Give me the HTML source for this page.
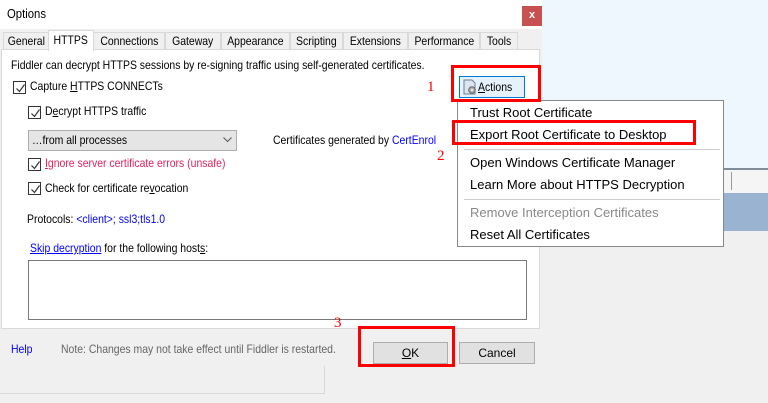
<!DOCTYPE html>
<html><head><meta charset="utf-8"><style>
*{margin:0;padding:0;box-sizing:border-box}
body{width:768px;height:403px;overflow:hidden;background:#f0f0f0;position:relative;font-family:"Liberation Sans","Noto Sans CJK SC",sans-serif;font-size:12px;color:#000}
.a{position:absolute;white-space:nowrap}
.n{transform-origin:0 0;transform:scaleX(.87)}
.cb{position:absolute;width:13px;height:13px;border:1px solid #333;background:#fff}
.cb svg{position:absolute;left:1px;top:1px}
.tab{position:absolute;top:32px;height:17px;border:1px solid #d9d9d9;border-bottom:none;background:#f0f0f0;font-size:12px;line-height:16px;text-align:center}
.tab span{display:inline-block;transform:scaleX(.87)}
.mi{position:absolute;left:12px;font-size:13px}
.red{position:absolute;border:3px solid #f00}
u{text-decoration:underline}
</style></head><body>
<div class="a" style="left:542px;top:0;width:226px;height:168px;background:#eef6fe"></div>
<div class="a" style="left:542px;top:168px;width:226px;height:2px;background:#7f8c99"></div>
<div class="a" style="left:542px;top:170px;width:226px;height:23px;background:#f5f5f5"></div>
<div class="a" style="left:731px;top:172px;width:1px;height:18px;background:#999"></div>
<div class="a" style="left:542px;top:193px;width:226px;height:38px;background:#9ab3d0"></div>
<div class="a" style="left:0;top:0;width:542px;height:29px;background:#fff"></div>
<div class="a n" style="left:7px;top:6px;font-size:13px">Options</div>
<div class="a" style="left:522px;top:6px;width:20px;height:20px;background:#c75050;color:#fff;font-size:11px;font-weight:bold;text-align:center;line-height:19px">x</div>
<div class="tab" style="left:3px;width:46px"><span>General</span></div>
<div class="tab" style="left:93px;width:72px"><span>Connections</span></div>
<div class="tab" style="left:165px;width:56px"><span>Gateway</span></div>
<div class="tab" style="left:221px;width:69px"><span>Appearance</span></div>
<div class="tab" style="left:290px;width:53px"><span>Scripting</span></div>
<div class="tab" style="left:343px;width:65px"><span>Extensions</span></div>
<div class="tab" style="left:408px;width:72px"><span>Performance</span></div>
<div class="tab" style="left:480px;width:38px"><span>Tools</span></div>
<div class="a" style="left:1px;top:49px;width:539px;height:280px;background:#fff;border:1px solid #d9d9d9"></div>
<div class="tab" style="left:48px;top:30px;width:46px;height:21px;background:#fff;border-color:#d9d9d9;line-height:18px;z-index:2"><span>HTTPS</span></div>
<div class="a n" style="left:11px;top:58px">Fiddler can decrypt HTTPS sessions by re-signing traffic using self-generated certificates.</div>
<div class="cb" style="left:13px;top:81px"><svg width="11" height="11"><path d="M1.5 5.5l3 3 5-7" stroke="#333" stroke-width="1.2" fill="none"/></svg></div>
<div class="a n" style="left:30px;top:79px">Capture <u>H</u>TTPS CONNECTs</div>
<div class="cb" style="left:28px;top:106px"><svg width="11" height="11"><path d="M1.5 5.5l3 3 5-7" stroke="#333" stroke-width="1.2" fill="none"/></svg></div>
<div class="a n" style="left:45px;top:104px">D<u>e</u>crypt HTTPS traffic</div>
<div class="a" style="left:28px;top:130px;width:209px;height:21px;background:#e5e5e5;border:1px solid #adadad"></div>
<div class="a n" style="left:32px;top:133px">…from all processes</div>
<svg class="a" style="left:223px;top:137px" width="9" height="6"><path d="M0.5 0.5l4 4 4-4" stroke="#555" fill="none"/></svg>
<div class="a n" style="left:273px;top:133px">Certificates generated by <span style="color:#00f">CertEnrol</span></div>
<div class="cb" style="left:28px;top:158px"><svg width="11" height="11"><path d="M1.5 5.5l3 3 5-7" stroke="#333" stroke-width="1.2" fill="none"/></svg></div>
<div class="a n" style="left:45px;top:156px;color:#e0245e"><u>I</u>gnore server certificate errors (unsafe)</div>
<div class="cb" style="left:28px;top:182px"><svg width="11" height="11"><path d="M1.5 5.5l3 3 5-7" stroke="#333" stroke-width="1.2" fill="none"/></svg></div>
<div class="a n" style="left:45px;top:181px">Check for certificate re<u>v</u>ocation</div>
<div class="a n" style="left:27px;top:212px">Protocols: <span style="color:#00f">&lt;client&gt;; ssl3;tls1.0</span></div>
<div class="a n" style="left:30px;top:241px"><u style="color:#00f">Skip decryption</u> for the following host<u>s</u>:</div>
<div class="a" style="left:28px;top:260px;width:499px;height:60px;border:1px solid #7a7a7a;background:#fff"></div>
<div class="a" style="left:0;top:366px;width:325px;height:28px;border-right:1px solid #d9d9d9;border-bottom:1px solid #d9d9d9"></div>
<div class="a n" style="left:11px;top:342px;color:#00f">Help</div>
<div class="a n" style="left:61px;top:342px;color:#666">Note: Changes may not take effect until Fiddler is restarted.</div>
<div class="a" style="left:373px;top:342px;width:75px;height:22px;background:#e1e1e1;border:1px solid #adadad;text-align:center;line-height:20px"><u>O</u>K</div>
<div class="a" style="left:459px;top:342px;width:76px;height:22px;background:#e1e1e1;border:1px solid #adadad;text-align:center;line-height:20px">Cancel</div>
<div class="a" style="left:459px;top:76px;width:66px;height:22px;background:#e5f1fb;border:1px solid #0078d7"></div>
<svg class="a" style="left:462px;top:79px" width="16" height="16"><path d="M2 1h8l3 3v11H2z" fill="#dde6f0" stroke="#6a7f99"/><circle cx="10" cy="11" r="3.3" fill="#aaa" stroke="#666"/><circle cx="10" cy="11" r="1.2" fill="#eee"/></svg>
<div class="a n" style="left:478px;top:80px"><u>A</u>ctions</div>
<div class="a" style="left:457px;top:100px;width:267px;height:147px;background:#fff;border:1px solid #888">
<div class="mi" style="top:4px">Trust Root Certificate</div>
<div class="mi" style="top:26px">Export Root Certificate to Desktop</div>
<div class="a" style="left:6px;top:48px;width:256px;height:1px;background:#ccc"></div>
<div class="mi" style="top:54px">Open Windows Certificate Manager</div>
<div class="mi" style="top:76px">Learn More about HTTPS Decryption</div>
<div class="a" style="left:6px;top:98px;width:256px;height:1px;background:#ccc"></div>
<div class="mi" style="top:104px;color:#888">Remove Interception Certificates</div>
<div class="mi" style="top:126px">Reset All Certificates</div>
</div>
<div class="red" style="left:451px;top:65px;width:90px;height:37px"></div>
<div class="red" style="left:452px;top:120px;width:244px;height:25px"></div>
<div class="red" style="left:358px;top:326px;width:97px;height:41px"></div>
<div class="a" style="left:427px;top:79px;color:#f00;font-family:'Liberation Serif',serif;font-size:15px">1</div>
<div class="a" style="left:437px;top:148px;color:#f00;font-family:'Liberation Serif',serif;font-size:15px">2</div>
<div class="a" style="left:334px;top:315px;color:#f00;font-family:'Liberation Serif',serif;font-size:15px">3</div>
</body></html>
